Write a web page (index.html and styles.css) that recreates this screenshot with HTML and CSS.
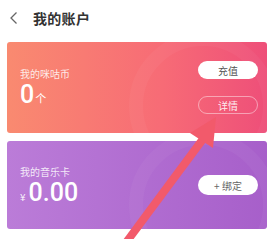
FILE: index.html
```html
<!DOCTYPE html>
<html>
<head>
<meta charset="utf-8">
<link rel="stylesheet" href="styles.css">
</head>
<body>
<div class="page">
  <div class="header">
    <svg class="back" width="10" height="14" viewBox="0 0 10 14"><path d="M7.5 1.5 L2 7 L7.5 12.5" fill="none" stroke="#666" stroke-width="1.3"/></svg>
    <span class="title">我的账户</span>
  </div>
  <div class="cards">
    <div class="card coin">
      <div class="info">
        <div class="label">我的咪咕币</div>
        <div class="value"><span class="num">0</span><span class="unit">个</span></div>
      </div>
      <div class="actions">
        <div class="btn solid">充值</div>
        <div class="btn outline">详情</div>
      </div>
    </div>
    <div class="card music">
      <div class="info">
        <div class="label">我的音乐卡</div>
        <div class="value"><span class="yen">¥</span><span class="num">0.00</span></div>
      </div>
      <div class="actions">
        <div class="btn solid">+ 绑定</div>
      </div>
    </div>
  </div>
  <svg class="arrow" width="277" height="239" viewBox="0 0 277 239">
    <line x1="122" y1="248" x2="203" y2="139" stroke="#f25a6b" stroke-width="8"/>
    <polygon points="216,117 213,148 190,133" fill="#f25a6b"/>
  </svg>
</div>
</body>
</html>
```
FILE: styles.css
```css
html, body {
  margin: 0;
  padding: 0;
  background: #ffffff;
}
.page {
  position: relative;
  width: 277px;
  height: 239px;
  overflow: hidden;
  font-family: "Noto Sans CJK SC", "Noto Sans", sans-serif;
}
.header {
  height: 34px;
  display: flex;
  align-items: center;
  padding-left: 9px;
  box-sizing: border-box;
  padding-top: 1px;
}
.back {
  display: block;
}
.title {
  margin-left: 14px;
  font-size: 14px;
  font-weight: 700;
  color: #333;
  letter-spacing: 0.3px;
}
.cards {
  display: flex;
  flex-direction: column;
  gap: 8px;
  padding: 8px 10px 0 7px;
}
.card {
  position: relative;
  overflow: hidden;
  border-radius: 3px;
  display: flex;
  align-items: center;
  justify-content: space-between;
  padding: 0 9px 0 13px;
  box-sizing: border-box;
}
.card::after {
  content: "";
  position: absolute;
  width: 120px;
  height: 120px;
  border-radius: 50%;
  border: 14px solid rgba(255,255,255,0.04);
  right: -10px;
  top: -10px;
  pointer-events: none;
}
.coin {
  height: 91px;
  background: linear-gradient(90deg, #f98a70 0%, #f76b76 60%, #ee4f79 100%);
}
.music {
  height: 88px;
  background: linear-gradient(90deg, #bb7cd8 0%, #a75fca 100%);
}
.info {
  display: flex;
  flex-direction: column;
  color: #fff;
}
.label {
  font-size: 10px;
  line-height: 12px;
  color: rgba(255,255,255,0.85);
}
.value {
  display: flex;
  align-items: baseline;
  margin-top: 3px;
}
.num {
  font-family: Roboto, "Noto Sans", sans-serif;
  font-size: 25px;
  line-height: 24px;
  font-weight: 500;
}
.unit {
  font-size: 11px;
  margin-left: 1px;
}
.yen {
  font-size: 10px;
  margin-right: 3px;
  color: rgba(255,255,255,0.9);
}
.actions {
  display: flex;
  flex-direction: column;
  gap: 17px;
}
.btn {
  width: 60px;
  height: 18px;
  border-radius: 9px;
  display: flex;
  align-items: center;
  justify-content: center;
  font-size: 10px;
  box-sizing: border-box;
}
.solid {
  background: #fff;
  color: #555;
}
.music .solid {
  height: 20px;
  border-radius: 10px;
  color: #666;
}
.outline {
  border: 1px solid rgba(255,255,255,0.45);
  color: rgba(255,255,255,0.9);
}
.arrow {
  position: absolute;
  left: 0;
  top: 0;
  pointer-events: none;
}
```
